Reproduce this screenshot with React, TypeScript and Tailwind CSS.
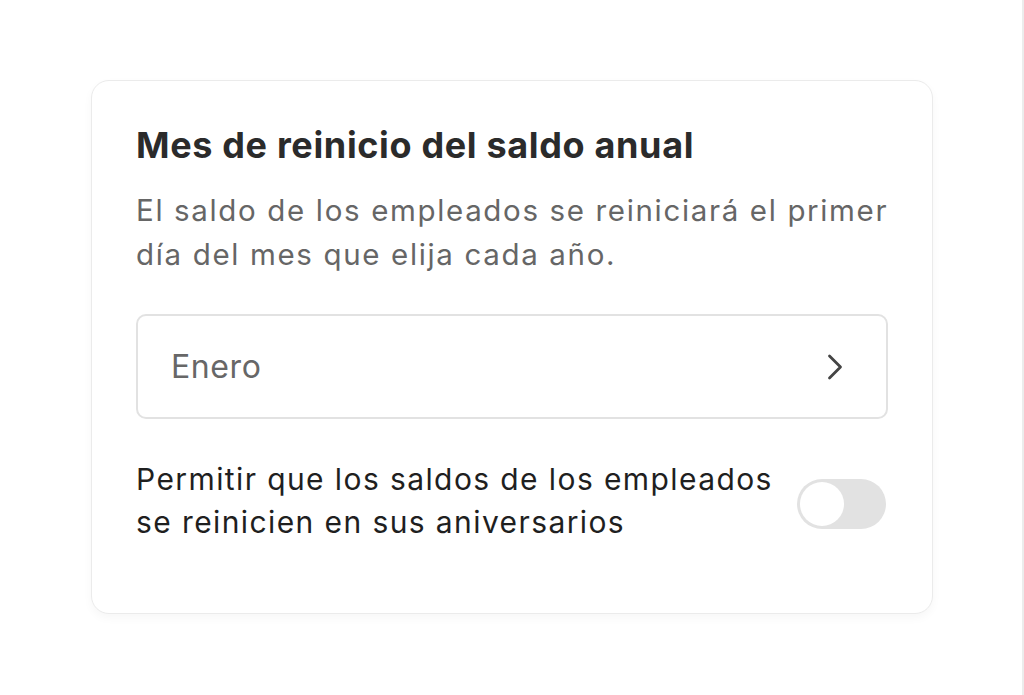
import React from "react";

export default function App() {
  return (
    <div
      className="w-[1024px] h-[695px] bg-white flex overflow-hidden"
      style={{ fontFamily: "Inter, 'Noto Sans', sans-serif" }}
    >
      <div className="flex-1 pl-[91px] pt-[80px]">
        <div className="w-[842px] rounded-[18px] border border-[#ebebeb] bg-white shadow-[0_4px_10px_rgba(0,0,0,0.035)] pl-[44px] pr-[44px] pt-[44px] pb-[69px]">
          <h1 className="text-[36px] leading-[40px] font-bold tracking-[0.65px] text-[#2b2b2b] whitespace-nowrap">
            Mes de reinicio del saldo anual
          </h1>
          <p className="mt-[23px] text-[29.5px] leading-[44px] tracking-[1.65px] text-[#666666] whitespace-nowrap">
            El saldo de los empleados se reiniciará el primer
            <br />
            día del mes que elija cada año.
          </p>
          <div className="mt-[38px] h-[105px] rounded-[10px] border-2 border-[#e2e2e2] flex items-center justify-between pl-[33px] pr-[43px]">
            <span className="text-[32px] leading-none tracking-[0.6px] text-[#676767]">Enero</span>
            <svg width="16" height="26" viewBox="0 0 16 26" fill="none">
              <path d="M2.5 2 L13.5 13 L2.5 24" stroke="#444" strokeWidth="2.8" strokeLinecap="round" strokeLinejoin="round" />
            </svg>
          </div>
          <div className="mt-[39px] flex items-center justify-between">
            <p className="text-[30px] leading-[43px] tracking-[1.4px] text-[#1f1f1f] whitespace-nowrap">
              Permitir que los saldos de los empleados
              <br />
              se reinicien en sus aniversarios
            </p>
            <div className="mt-[5px] w-[89px] h-[50px] rounded-full bg-[#e2e2e2] p-[3px] flex items-center mr-[2px]">
              <div className="w-[44px] h-[44px] rounded-full bg-white" />
            </div>
          </div>
        </div>
      </div>
      <div className="w-[2px] h-full bg-[#ececec]" />
    </div>
  );
}
